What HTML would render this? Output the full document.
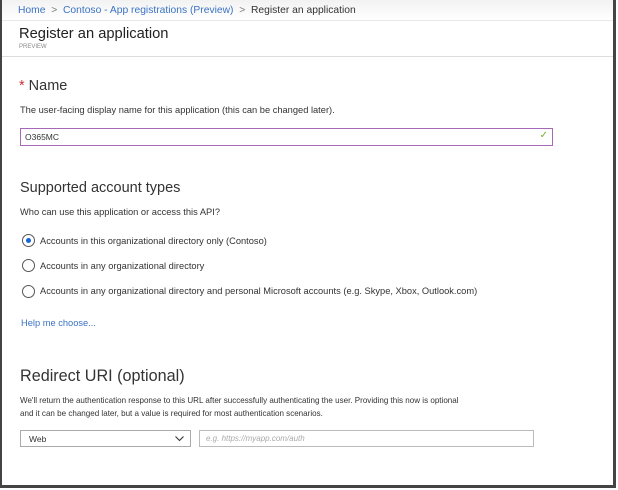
<!DOCTYPE html>
<html><head><style>
*{margin:0;padding:0;box-sizing:border-box}
body{width:618px;height:490px;background:#fff;position:relative;overflow:hidden;font-family:"Liberation Sans",sans-serif;color:#333}
.frame{position:absolute;left:0;top:0;width:616px;height:488px;border-left:2px solid #444;border-right:3px solid #444;border-bottom:3px solid #444}
.a{position:absolute;white-space:nowrap}
.sm{font-size:9.3px;color:#333}
.h{font-size:14.5px;color:#333}
.radio{position:absolute;width:13px;height:13px;border:1px solid #555;border-radius:50%;background:#fff}
</style></head><body>
<div class="a" style="left:0;top:0;width:614px;height:21px;background:linear-gradient(#f2f2f2,#fff);border-bottom:1px solid #e8e8e8"></div>
<div class="a" style="left:18px;top:5px;font-size:10.3px;color:#3b73c4">Home <span style="color:#777">&nbsp;&gt;&nbsp;</span> Contoso - App registrations (Preview) <span style="color:#777">&nbsp;&gt;&nbsp;</span> <span style="color:#333">Register an application</span></div>
<div class="a" style="left:19px;top:26px;font-size:14.7px;color:#222">Register an application</div>
<div class="a" style="left:19px;top:44px;font-size:6px;color:#888">PREVIEW</div>
<div class="a" style="left:2px;top:56px;width:612px;height:1px;background:#ddd"></div>
<div class="a h" style="left:19px;top:78px"><span style="color:#c33">*</span> Name</div>
<div class="a sm" style="left:20px;top:105px">The user-facing display name for this application (this can be changed later).</div>
<div class="a" style="left:20px;top:128px;width:533px;height:18px;border:1px solid #a569b8;font-size:8.5px;padding:3px 0 0 4px;color:#333">O365MC<span style="position:absolute;right:4px;top:1px;color:#7a3;font-size:10px">✓</span></div>
<div class="a h" style="left:20px;top:180px">Supported account types</div>
<div class="a sm" style="left:20px;top:207px">Who can use this application or access this API?</div>
<div class="radio" style="left:22px;top:234px"><div style="position:absolute;left:3px;top:3px;width:5px;height:5px;border-radius:50%;background:#1565d8"></div></div>
<div class="a sm" style="left:40px;top:236px">Accounts in this organizational directory only (Contoso)</div>
<div class="radio" style="left:22px;top:259px"></div>
<div class="a sm" style="left:40px;top:261px">Accounts in any organizational directory</div>
<div class="radio" style="left:22px;top:285px"></div>
<div class="a sm" style="left:40px;top:286px">Accounts in any organizational directory and personal Microsoft accounts (e.g. Skype, Xbox, Outlook.com)</div>
<div class="a sm" style="left:21px;top:318px;color:#3b73c4">Help me choose...</div>
<div class="a" style="left:20px;top:367px;font-size:16.2px;color:#333">Redirect URI (optional)</div>
<div class="a" style="left:20px;top:394px;line-height:13px;font-size:8.05px">We'll return the authentication response to this URL after successfully authenticating the user. Providing this now is optional<br>and it can be changed later, but a value is required for most authentication scenarios.</div>
<div class="a" style="left:20px;top:430px;width:171px;height:17px;border:1px solid #aaa;font-size:8.5px;padding:3px 0 0 8px">Web<svg style="position:absolute;right:6px;top:5px" width="9" height="6"><path d="M0.5 0.5L4.5 4.5L8.5 0.5" fill="none" stroke="#333" stroke-width="1.1"/></svg></div>
<div class="a" style="left:199px;top:430px;width:335px;height:17px;border:1px solid #bbb;font-size:8px;padding:3px 0 0 6px;color:#aaa;font-style:italic">e.g. https://myapp.com/auth</div>
<div class="frame"></div>
</body></html>
